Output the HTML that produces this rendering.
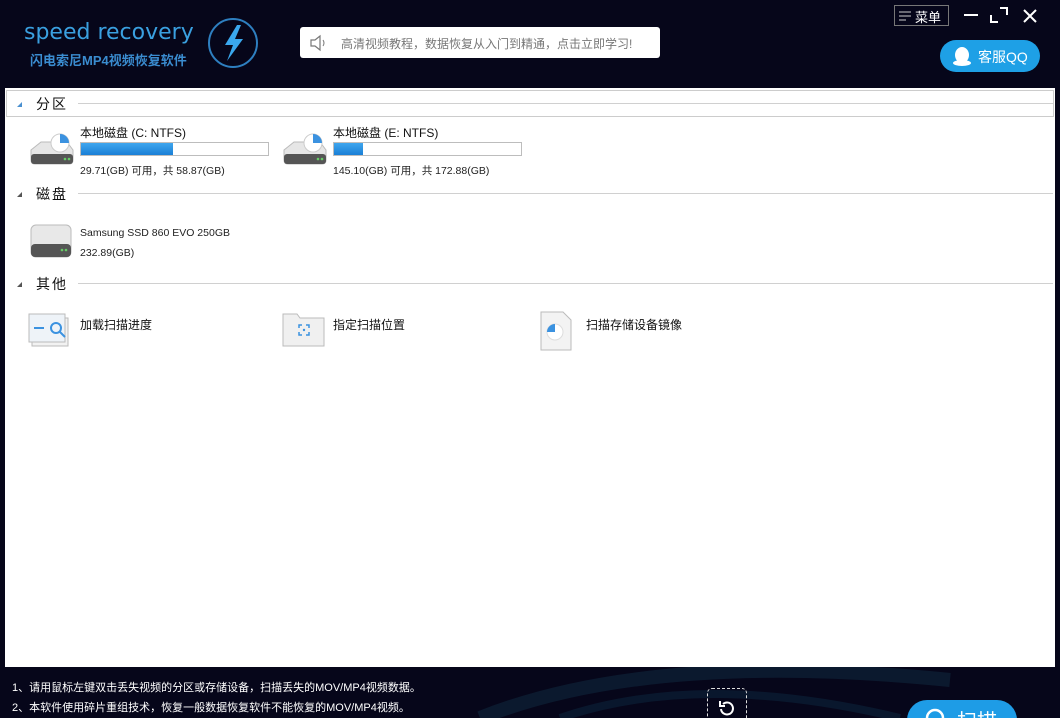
<!DOCTYPE html>
<html><head><meta charset="utf-8"><style>
*{margin:0;padding:0;box-sizing:border-box}
html{width:1060px;height:718px;overflow:hidden}
body{width:1060px;height:718px;overflow:hidden;background:#06061a;font-family:"Liberation Sans","Noto Sans CJK SC",sans-serif;position:relative;color:#000}
.abs{position:absolute;white-space:nowrap}
.panel{left:5px;top:88px;width:1050px;height:579px;background:#fff}
.sec{position:absolute;left:0;width:1050px;height:20px;font-size:14px;color:#111}
.sec .tri{position:absolute;left:12px;top:6px;width:0;height:0;border-left:5px solid transparent;border-bottom:5px solid #4a90d0}
.sec .t{position:absolute;left:31px;top:-2px;letter-spacing:2px;white-space:nowrap}
.sec .ln{position:absolute;left:73px;top:7px;width:975px;height:1px;background:#d0d0d0}
.lbl{font-size:12px;color:#111}
.sm{font-size:10.5px;color:#222}
.bar{width:189px;height:14px;border:1px solid #bdbdbd;background:#fff}
.bar div{height:12px;background:linear-gradient(#3fa6ee,#1a7fd6)}
.foot{font-size:11px;color:#fff}
</style></head><body>
<svg class="abs" style="left:0;top:660px" width="1060" height="58"><path d="M480 58 Q650 -10 950 20" stroke="#0e2238" stroke-width="14" fill="none" opacity=".7"/><path d="M560 58 Q700 10 900 58" stroke="#0c2036" stroke-width="8" fill="none" opacity=".7"/></svg>
<div class="abs" style="left:24px;top:20px;font-size:22px;color:#3aa0e0;letter-spacing:0px;font-family:'DejaVu Sans',sans-serif">speed recovery</div>
<div class="abs" style="left:30px;top:50px;font-size:13px;color:#3a8cd0;font-weight:bold">闪电索尼MP4视频恢复软件</div>
<svg class="abs" style="left:205px;top:15px" width="56" height="56"><circle cx="28" cy="28" r="24" fill="none" stroke="#2e7fc0" stroke-width="2"/><path d="M32 10 L20 30 L28 30 L22 46 L38 24 L30 24 L36 10Z" fill="#3aa8ee"/></svg>
<div class="abs" style="left:300px;top:27px;width:360px;height:31px;background:#fff;border-radius:3px"></div>
<svg class="abs" style="left:309px;top:34px" width="22" height="18"><path d="M2 6h4l5-4v14l-5-4H2z" fill="none" stroke="#777" stroke-width="1.2"/><path d="M14 6q2 3 0 6" fill="none" stroke="#777"/></svg>
<div class="abs" style="left:341px;top:35px;font-size:12px;color:#777">高清视频教程，数据恢复从入门到精通，点击立即学习!</div>
<div class="abs" style="left:894px;top:5px;width:55px;height:21px;border:1px solid #777;color:#fff;font-size:13px;padding:1px 0 0 20px">菜单</div>
<svg class="abs" style="left:898px;top:10px" width="16" height="12"><path d="M1 2h12M1 6h12M1 10h7" stroke="#ccc"/></svg>
<div class="abs" style="left:964px;top:14px;width:14px;height:2px;background:#fff"></div>
<svg class="abs" style="left:990px;top:7px" width="18" height="16"><path d="M1 8v7h7M10 1h7v7" stroke="#fff" stroke-width="2" fill="none"/></svg>
<svg class="abs" style="left:1022px;top:8px" width="16" height="16"><path d="M2 2L14 14M14 2L2 14" stroke="#fff" stroke-width="2"/></svg>
<div class="abs" style="left:940px;top:40px;width:100px;height:32px;background:#1ea0e6;border-radius:16px;color:#fff;font-size:14px;padding:7px 0 0 38px">客服QQ</div>
<svg class="abs" style="left:952px;top:45px" width="20" height="22"><ellipse cx="10" cy="10" rx="7" ry="8" fill="#fff"/><ellipse cx="10" cy="18" rx="9" ry="3" fill="#fff"/></svg>
<div class="abs panel">
<div class="abs" style="left:1px;top:2px;width:1048px;height:27px;border:1px solid #ccc"></div>
<div class="sec" style="top:8px"><div class="tri"></div><div class="t">分区</div><div class="ln"></div></div>
<div class="sec" style="top:98px"><div class="tri" style="border-bottom-color:#555"></div><div class="t">磁盘</div><div class="ln"></div></div>
<div class="sec" style="top:188px"><div class="tri" style="border-bottom-color:#555"></div><div class="t">其他</div><div class="ln"></div></div>
<svg class="abs" style="left:22px;top:40px" width="50" height="42"><path d="M4 22 L14 14 H40 L46 22 V32 Q46 36 42 36 H8 Q4 36 4 32Z" fill="#e6e6e6" stroke="#bbb"/><rect x="4" y="26" width="42" height="10" rx="3" fill="#555"/><circle cx="38" cy="31" r="1.3" fill="#6c6"/><circle cx="42" cy="31" r="1.3" fill="#6c6"/><circle cx="33" cy="15" r="9" fill="#fff" stroke="#ccc"/><path d="M33 6 A9 9 0 0 1 42 15 H33Z" fill="#3b92e0"/></svg>
<div class="abs lbl" style="left:75px;top:36px">本地磁盘 (C: NTFS)</div>
<div class="abs bar" style="left:75px;top:54px"><div style="width:92px"></div></div>
<div class="abs sm" style="left:75px;top:75px">29.71(GB) 可用，共 58.87(GB)</div>
<svg class="abs" style="left:275px;top:40px" width="50" height="42"><path d="M4 22 L14 14 H40 L46 22 V32 Q46 36 42 36 H8 Q4 36 4 32Z" fill="#e6e6e6" stroke="#bbb"/><rect x="4" y="26" width="42" height="10" rx="3" fill="#555"/><circle cx="38" cy="31" r="1.3" fill="#6c6"/><circle cx="42" cy="31" r="1.3" fill="#6c6"/><circle cx="33" cy="15" r="9" fill="#fff" stroke="#ccc"/><path d="M33 6 A9 9 0 0 1 42 15 H33Z" fill="#3b92e0"/></svg>
<div class="abs lbl" style="left:328px;top:36px">本地磁盘 (E: NTFS)</div>
<div class="abs bar" style="left:328px;top:54px"><div style="width:29px"></div></div>
<div class="abs sm" style="left:328px;top:75px">145.10(GB) 可用，共 172.88(GB)</div>
<svg class="abs" style="left:22px;top:132px" width="50" height="40"><rect x="4" y="5" width="40" height="32" rx="5" fill="#e8e8e8" stroke="#bbb"/><rect x="4" y="24" width="40" height="13" rx="4" fill="#555"/><circle cx="35" cy="30" r="1.3" fill="#6c6"/><circle cx="39" cy="30" r="1.3" fill="#6c6"/></svg>
<div class="abs sm" style="left:75px;top:139px">Samsung SSD 860 EVO 250GB</div>
<div class="abs sm" style="left:75px;top:159px">232.89(GB)</div>
<svg class="abs" style="left:22px;top:222px" width="46" height="40"><rect x="5" y="8" width="36" height="28" fill="#f2f2f2" stroke="#bbb"/><rect x="2" y="4" width="36" height="28" fill="#eef3f8" stroke="#bbb"/><path d="M7 18h10" stroke="#3b92e0" stroke-width="2"/><circle cx="29" cy="18" r="5" fill="none" stroke="#3b92e0" stroke-width="2"/><path d="M33 22l5 5" stroke="#3b92e0" stroke-width="2"/></svg>
<div class="abs lbl" style="left:75px;top:228px">加载扫描进度</div>
<svg class="abs" style="left:276px;top:222px" width="46" height="40"><path d="M2 4h14l3 4h24v28H2z" fill="#f0f0f0" stroke="#bbb"/><path d="M18 18v-3h3M25 15h3v3M28 22v3h-3M21 25h-3v-3" stroke="#3b92e0" stroke-width="1.5" fill="none"/><circle cx="23" cy="20" r="1.2" fill="#3b92e0"/></svg>
<div class="abs lbl" style="left:328px;top:228px">指定扫描位置</div>
<svg class="abs" style="left:532px;top:220px" width="40" height="44"><path d="M4 4h22l8 8v30H4z" fill="#f3f3f3" stroke="#bbb"/><circle cx="18" cy="24" r="8" fill="#fff" stroke="#ddd"/><path d="M18 16A8 8 0 0 0 10 24H18Z" fill="#3b92e0"/></svg>
<div class="abs lbl" style="left:581px;top:228px">扫描存储设备镜像</div>
</div>
<div class="abs foot" style="left:12px;top:679px">1、请用鼠标左键双击丢失视频的分区或存储设备，扫描丢失的MOV/MP4视频数据。</div>
<div class="abs foot" style="left:12px;top:699px">2、本软件使用碎片重组技术，恢复一般数据恢复软件不能恢复的MOV/MP4视频。</div>
<div class="abs" style="left:707px;top:688px;width:40px;height:40px;border:1px dashed #ddd;border-radius:5px"></div>
<svg class="abs" style="left:716px;top:698px" width="22" height="20"><path d="M5 11a6 6 0 1 0 2-5" stroke="#fff" stroke-width="2" fill="none"/><path d="M4 3v5h5" stroke="#fff" stroke-width="2" fill="none"/></svg>
<div class="abs" style="left:907px;top:700px;width:110px;height:40px;background:#1e9ce6;border-radius:20px;color:#fff;font-size:20px;padding:5px 0 0 50px">扫描</div>
<svg class="abs" style="left:924px;top:707px" width="24" height="14"><circle cx="11" cy="11" r="8" stroke="#fff" stroke-width="2.5" fill="none"/></svg>
</body></html>
